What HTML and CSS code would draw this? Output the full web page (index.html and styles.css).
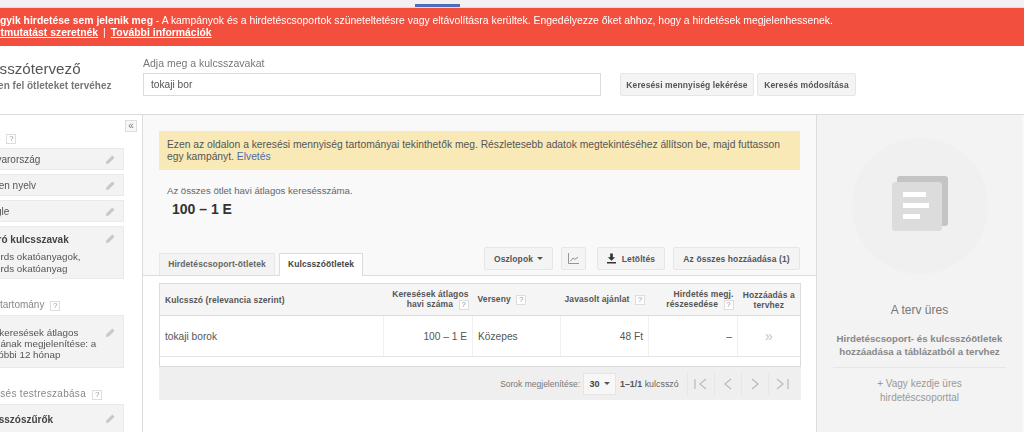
FILE: index.html
```html
<!DOCTYPE html>
<html lang="hu">
<head>
<meta charset="utf-8">
<title>Kulcsszótervező</title>
<link rel="stylesheet" href="styles.css">
</head>
<body>
<div class="page">
  <div class="topbar"><span class="topbar-tab"></span></div>
  <div class="alert">
    <div><b>Egyik hirdetése sem jelenik meg</b> - A kampányok és a hirdetéscsoportok szüneteltetésre vagy eltávolításra kerültek. Engedélyezze őket ahhoz, hogy a hirdetések megjelenhessenek.</div>
    <div><a>Útmutatást szeretnék</a><span class="alert-sep">|</span><a>További információk</a></div>
  </div>
  <header class="head">
    <div class="head-title">
      <h1>Kulcsszótervező</h1>
      <p>Gyűjtsen fel ötleteket tervéhez</p>
    </div>
    <div class="head-search">
      <label>Adja meg a kulcsszavakat</label>
      <div class="search-row">
        <div class="search-input">tokaji bor</div>
        <button class="btn btn-first">Keresési mennyiség lekérése</button>
        <button class="btn">Keresés módosítása</button>
      </div>
    </div>
  </header>
  <div class="body">
    <aside class="side">
      <div class="collapse-row"><span class="collapse">«</span></div>
      <div class="side-h side-h-first">Célzás <i class="q">?</i></div>
      <div class="card card-s"><span>Magyarország</span><svg class="pen" viewBox="0 0 12 12"><path d="M1 11l.6-3L8 1.600 10.400 4 4 10.400z"/></svg></div>
      <div class="card card-s"><span>Minden nyelv</span><svg class="pen" viewBox="0 0 12 12"><path d="M1 11l.6-3L8 1.600 10.400 4 4 10.400z"/></svg></div>
      <div class="card card-s"><span>Google</span><svg class="pen" viewBox="0 0 12 12"><path d="M1 11l.6-3L8 1.600 10.400 4 4 10.400z"/></svg></div>
      <div class="card card-l"><div><b>Kizáró kulcsszavak</b><p>AdWords okatóanyagok,<br>AdWords okatóanyag</p></div><svg class="pen" viewBox="0 0 12 12"><path d="M1 11l.6-3L8 1.600 10.400 4 4 10.400z"/></svg></div>
      <div class="side-h side-h-2">Dátumtartomány <i class="q">?</i></div>
      <div class="card card-l card-date"><div>Havi keresések átlagos<br>számának megjelenítése: a<br>legutóbbi 12 hónap</div><svg class="pen" viewBox="0 0 12 12"><path d="M1 11l.6-3L8 1.600 10.400 4 4 10.400z"/></svg></div>
      <div class="side-h side-h-3">Keresés testreszabása <i class="q">?</i></div>
      <div class="card card-l card-last"><div><b>Kulcsszószűrők</b></div><svg class="pen" viewBox="0 0 12 12"><path d="M1 11l.6-3L8 1.600 10.400 4 4 10.400z"/></svg></div>
    </aside>
    <main class="main">
      <div class="notice">Ezen az oldalon a keresési mennyiség tartományai tekinthetők meg. Részletesebb adatok megtekintéséhez állítson be, majd futtasson egy kampányt. <a>Elvetés</a></div>
      <div class="stat">
        <p>Az összes ötlet havi átlagos keresésszáma.</p>
        <strong>100 – 1 E</strong>
      </div>
      <div class="toolbar">
        <div class="tabs">
          <span class="tab">Hirdetéscsoport-ötletek</span>
          <span class="tab tab-on">Kulcsszóötletek</span>
        </div>
        <div class="tools">
          <button class="btn tool tool-cols">Oszlopok <i class="caret"></i></button>
          <button class="btn tool tool-chart"><svg viewBox="0 0 12 12" width="11" height="11"><path d="M.5 0v11.500H12M2.500 9l3-3.500 2 1.500L11 4.500" fill="none" stroke="#888" stroke-width="1"/></svg></button>
          <button class="btn tool tool-dl"><svg viewBox="0 0 10 11" width="9" height="11"><path d="M3.500 0h3v4H9L5 8 1 4h2.500zM0 9.500h10V11H0z" fill="#333"/></svg>Letöltés</button>
          <button class="btn tool tool-add">Az összes hozzáadása (1)</button>
        </div>
      </div>
      <div class="content">
        <table class="grid">
          <thead>
            <tr>
              <th class="c1 l">Kulcsszó (relevancia szerint)</th>
              <th class="c2 r">Keresések átlagos<br>havi száma <i class="q">?</i></th>
              <th class="c3 l">Verseny <i class="q">?</i></th>
              <th class="c4 r">Javasolt ajánlat <i class="q">?</i></th>
              <th class="c5 r">Hirdetés megj.<br>részesedése <i class="q">?</i></th>
              <th class="c6">Hozzáadás a<br>tervhez</th>
            </tr>
          </thead>
          <tbody>
            <tr>
              <td class="l">tokaji borok</td>
              <td class="r">100 – 1 E</td>
              <td class="l">Közepes</td>
              <td class="r">48 Ft</td>
              <td class="r">–</td>
              <td class="add">»</td>
            </tr>
          </tbody>
        </table>
        <div class="spacer"></div>
        <div class="pager">
          <span class="pager-label">Sorok megjelenítése:</span>
          <span class="pager-size"><b>30</b><i class="caret"></i></span>
          <span class="pager-count"><b>1–1/1</b> kulcsszó</span>
          <span class="pager-nav">
            <span class="nav-btn"><svg viewBox="0 0 14 12" width="14" height="12"><path d="M1 1v10M12 1L6 6l6 5" /></svg></span>
            <span class="nav-btn"><svg viewBox="0 0 14 12" width="14" height="12"><path d="M10 1L4 6l6 5" /></svg></span>
            <span class="nav-btn"><svg viewBox="0 0 14 12" width="14" height="12"><path d="M4 1l6 5-6 5" /></svg></span>
            <span class="nav-btn"><svg viewBox="0 0 14 12" width="14" height="12"><path d="M2 1l6 5-6 5M13 1v10" /></svg></span>
          </span>
        </div>
      </div>
    </main>
    <aside class="plan">
      <div class="plan-circle">
        <svg viewBox="0 0 56 55" width="56" height="55">
          <rect x="5" y="0" width="51" height="50" rx="3" fill="#c4c4c4"/>
          <rect x="0" y="6" width="50" height="49" rx="3" fill="#dcdcdc"/>
          <rect x="11" y="16" width="23" height="5" fill="#fff"/>
          <rect x="11" y="27" width="26" height="5" fill="#fff"/>
          <rect x="11" y="38" width="17" height="5" fill="#fff"/>
        </svg>
      </div>
      <h2>A terv üres</h2>
      <p class="plan-b">Hirdetéscsoport- és kulcsszóötletek<br>hozzáadása a táblázatból a tervhez</p>
      <p class="plan-link">+ Vagy kezdje üres<br>hirdetéscsoporttal</p>
    </aside>
  </div>
</div>
</body>
</html>
```

FILE: styles.css
```css
* { box-sizing: border-box; }
html, body { margin: 0; padding: 0; height: 432px; overflow: hidden; background: #fff; }
body { font-family: "Liberation Sans", Arial, sans-serif; font-size: 10.2px; color: #555; }
.page { width: 1064px; height: 432px; margin-left: -40px; overflow: hidden; filter: blur(0.4px); }
button { font-family: inherit; }

.topbar { height: 8px; background: #f1f1f1; border-bottom: 1px solid #ddd; padding: 4px 0 0 455px; }
.topbar-tab { display: block; width: 45px; height: 3px; background: #4d6dbd; }

.alert { height: 38px; background: #f24f3e; color: #fff; padding: 7px 0 0 33px; font-size: 10.4px; line-height: 12px; }
.alert a { font-weight: 700; text-decoration: underline; }
.alert-sep { margin: 0 5px; font-weight: 400; }

.head { height: 69px; border-bottom: 1px solid #dcdcdc; display: flex; }
.head-title { width: 183px; padding: 14px 0 0 10px; }
.head-title h1 { margin: 0; font-size: 15.2px; line-height: 18px; font-weight: 400; color: #555; }
.head-title p { margin: 1px 0 0 -3px; font-size: 10px; line-height: 13px; font-weight: 700; color: #777; }
.head-search { padding-top: 10px; }
.head-search label { display: block; font-size: 10.5px; line-height: 14px; color: #777; margin-bottom: 3px; }
.search-row { display: flex; }
.search-input { width: 458px; height: 23px; border: 1px solid #dcdcdc; background: #fff; padding-left: 7px; line-height: 21px; font-size: 10.2px; color: #555; margin-right: 19px; }
.btn { height: 23px; padding: 0; border: 1px solid #e6e6e6; border-radius: 2px; background: #f4f4f4; color: #555; font-size: 8.5px; font-weight: 700; letter-spacing: .1px; }
.search-row .btn { width: 99px; }
.search-row .btn-first { width: 134px; margin-right: 3px; }

.body { display: flex; height: 318px; }
.side { width: 183px; border-right: 1px solid #dcdcdc; padding: 5px 0 0 16px; overflow: hidden; }
.collapse-row { display: flex; justify-content: flex-end; padding-right: 5px; height: 11px; }
.collapse { width: 12px; height: 12px; border: 1px solid #ddd; background: #f7f7f7; color: #777; font-size: 10px; line-height: 9px; text-align: center; }
.side-h { font-size: 10px; line-height: 14px; color: #888; }
.side-h-first { margin: 0 0 0 -6px; height: 17px; }
.side-h-2 { margin: 19px 0 3px -5.5px; height: 14px; }
.side-h-3 { margin: 19px 0 3px 2px; height: 14px; letter-spacing: .3px; }
.q { display: inline-block; width: 10px; height: 10px; margin-left: 3px; border: 1px solid #ddd; background: #fff; color: #999; font-size: 8px; line-height: 8px; font-style: normal; font-weight: 400; text-align: center; vertical-align: 0; letter-spacing: 0; }
.card { display: flex; justify-content: space-between; margin: 0 0 4px -16px; width: 164px; padding-left: 16px; padding-right: 7px; background: #f3f3f3; border: 1px solid #eaeaea; font-size: 10px; color: #555; }
.card-s { height: 22px; align-items: center; }
.card-l { height: 53px; padding-top: 6px; line-height: 11px; }
.card-l > div { white-space: nowrap; }
.card-l b { color: #444; display: block; line-height: 14px; font-size: 10px; }
.card-l p { margin: 4px 0 0 -3px; line-height: 11.5px; font-size: 9.8px; }
.card-date { padding-top: 11px; line-height: 11px; font-size: 9.8px; }
.card-last { padding-top: 8px; height: 60px; }
.pen { width: 11px; height: 11px; flex: none; fill: #c8c8c8; }

.main { width: 673px; background: #f9f9f9; display: flex; flex-direction: column; }
.notice { margin: 16px 16px 0; height: 39px; padding: 8px 8px 0; background: #f8e9b7; font-size: 10.3px; line-height: 12px; color: #555; }
.notice a { color: #4d6da8; }
.stat { padding: 15px 0 0 24px; height: 77px; }
.stat p { margin: 0; font-size: 9.6px; line-height: 12px; color: #666; }
.stat strong { display: block; margin: 4px 0 0 5px; font-size: 14px; line-height: 16px; color: #333; }

.toolbar { display: flex; justify-content: space-between; align-items: flex-end; padding: 0 16px; height: 29px; border-bottom: 1px solid #dcdcdc; }
.tabs { display: flex; gap: 4px; }
.tab { height: 22px; width: 116px; border: 1px solid #e8e8e8; border-bottom: 0; background: #f3f3f3; text-align: center; font-size: 8.5px; line-height: 21px; font-weight: 700; color: #666; letter-spacing: .1px; }
.tab-on { width: 84px; height: 23px; margin-bottom: -1px; background: #fff; border-color: #dcdcdc; color: #444; }
.tools { display: flex; align-self: flex-start; }
.tool { display: flex; align-items: center; justify-content: center; }
.tool-cols { width: 69px; margin-right: 8px; }
.tool-chart { width: 25px; margin-right: 11px; }
.tool-dl { width: 68px; margin-right: 8px; gap: 6px; }
.tool-add { width: 127px; }
.caret { display: inline-block; width: 0; height: 0; margin-left: 4px; border: 3px solid transparent; border-top: 3px solid #555; border-bottom: 0; vertical-align: 1px; }

.content { flex: 1; background: #fff; padding: 7px 15px 0 16px; }
.grid { width: 642px; table-layout: fixed; border-collapse: collapse; background: #fff; border: 1px solid #dcdcdc; border-bottom: 1px solid #e5e5e5; }
.grid th { height: 32px; background: #f5f5f5; border-bottom: 1px solid #dcdcdc; font-size: 8.5px; line-height: 10px; font-weight: 700; color: #555; padding: 0 4px; letter-spacing: .1px; white-space: nowrap; }
.grid td { height: 41px; border-right: 1px solid #f0f0f0; border-bottom: 1px solid #e5e5e5; font-size: 10.2px; color: #555; padding: 0 5px; }
.grid td:last-child { border-right: 0; }
.grid .l { text-align: left; padding-left: 5px; }
.grid .r { text-align: right; }
.grid .c1 { width: 224px; }
.grid .c2 { width: 89px; }
.grid .c3 { width: 88px; }
.grid .c4 { width: 88px; }
.grid .c5 { width: 89px; }
.grid .add { text-align: center; color: #c4c4c4; font-size: 14px; }
.spacer { width: 642px; height: 10px; background: #fff; border-left: 1px solid #dcdcdc; border-right: 1px solid #dcdcdc; border-bottom: 1px solid #dcdcdc; }
.pager { width: 642px; height: 33px; background: #efefef; display: flex; align-items: center; justify-content: flex-end; padding-right: 6px; font-size: 8.5px; color: #777; }
.pager-size { width: 33px; height: 22px; margin: 0 4px 0 3px; background: #f7f7f7; border: 1px solid #e5e5e5; display: flex; align-items: center; justify-content: center; color: #444; }
.pager-size b { font-size: 9px; }
.pager-count { color: #666; width: 67px; font-size: 8.9px; }
.pager-count b { color: #555; }
.pager-nav { display: flex; }
.nav-btn { width: 27px; height: 22px; display: flex; align-items: center; justify-content: center; border-left: 1px solid #e6e6e6; }
.nav-btn svg { fill: none; stroke: #bdbdbd; stroke-width: 1.3; }

.plan { width: 208px; background: #f3f3f3; border-left: 1px solid #dcdcdc; border-right: 2px solid #f8f8f8; text-align: center; padding-top: 23px; }
.plan-circle { width: 136px; height: 136px; margin: 0 auto; padding-bottom: 5px; border-radius: 50%; background: #f0f0f0; display: flex; align-items: center; justify-content: center; }
.plan h2 { margin: 29px 0 0; font-size: 12px; line-height: 14px; font-weight: 400; color: #777; }
.plan-b { margin: 16px 16px 0; padding-bottom: 9px; border-bottom: 1px solid #e6e6e6; font-size: 9.7px; line-height: 12.5px; font-weight: 700; color: #888; }
.plan-link { margin: 9px 0 0; font-size: 10px; line-height: 14px; color: #999; }
```
